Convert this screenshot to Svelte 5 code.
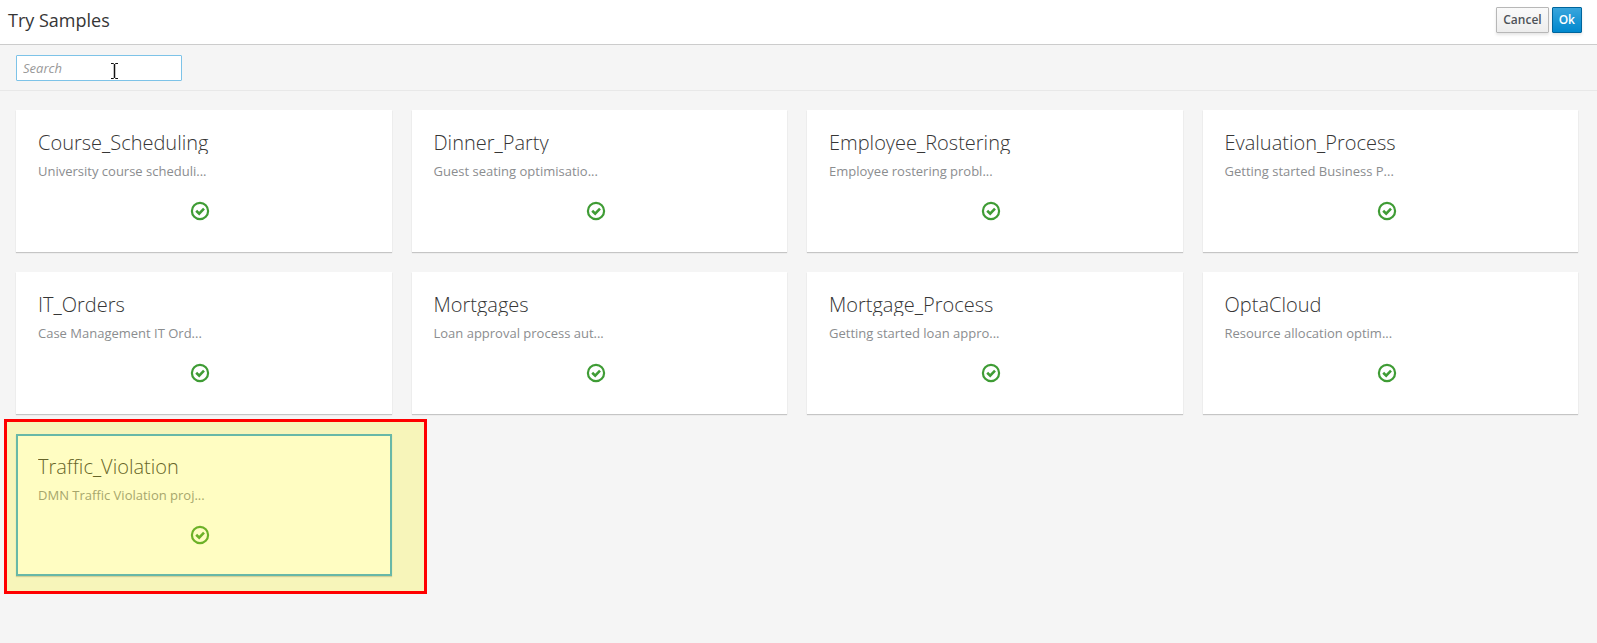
<script>
  const samples = [
    { name: 'Course_Scheduling', description: 'University course scheduli...' },
    { name: 'Dinner_Party', description: 'Guest seating optimisatio...' },
    { name: 'Employee_Rostering', description: 'Employee rostering probl...' },
    { name: 'Evaluation_Process', description: 'Getting started Business P...' },
    { name: 'IT_Orders', description: 'Case Management IT Ord...' },
    { name: 'Mortgages', description: 'Loan approval process aut...' },
    { name: 'Mortgage_Process', description: 'Getting started loan appro...' },
    { name: 'OptaCloud', description: 'Resource allocation optim...' },
    { name: 'Traffic_Violation', description: 'DMN Traffic Violation proj...' }
  ];
  let selected = $state('Traffic_Violation');
  let query = $state('');
  const visible = $derived(
    samples.filter((s) => s.name.toLowerCase().includes(query.toLowerCase()))
  );
</script>

<div class="page">
  <header>
    <h1>Try Samples</h1>
    <div class="actions">
      <button class="btn" type="button">Cancel</button>
      <button class="btn primary" type="button">Ok</button>
    </div>
  </header>

  <div class="toolbar">
    <div class="search">
      <input type="text" placeholder="Search" aria-label="Search" bind:value={query} />
      <svg class="caret" width="9" height="18" viewBox="0 0 9 18" aria-hidden="true">
        <path d="M1 1.5h2.5l1 1 1-1H8M4.5 2v14M1 16.5h2.5l1-1 1 1H8" fill="none" stroke="#fff" stroke-width="3" />
        <path d="M1 1.5h2.5l1 1 1-1H8M1 16.5h2.5l1-1 1 1H8" fill="none" stroke="#111" />
        <path d="M4.5 2v14" fill="none" stroke="#111" stroke-width="1.5" />
      </svg>
    </div>
  </div>

  <main>
    {#each visible as sample (sample.name)}
      <div class="cell">
        <button
          class="card"
          class:selected={sample.name === selected}
          type="button"
          aria-pressed={sample.name === selected}
          onclick={() => (selected = sample.name)}
        >
          <span class="name">{sample.name}</span>
          <span class="description">{sample.description}</span>
          <svg class="ok" width="20" height="20" viewBox="0 0 20 20" aria-hidden="true">
            <circle cx="10" cy="10" r="8.1" fill="none" stroke="#3f9c35" stroke-width="2.2" />
            <path d="M6.2 9.7l3 2.9 4.8-4.9" fill="none" stroke="#3f9c35" stroke-width="2.6" />
          </svg>
        </button>
        {#if sample.name === selected}
          <div class="highlight"></div>
        {/if}
      </div>
    {/each}
  </main>
</div>

<style>
  :global(body) {
    background: #f5f5f5;
  }
  .page {
    min-height: 100vh;
    background: #f5f5f5;
    color: #363636;
    font-family: 'Open Sans', sans-serif;
    font-size: 13px;
    line-height: 20px;
  }
  header {
    display: flex;
    align-items: center;
    justify-content: space-between;
    box-sizing: border-box;
    height: 45px;
    padding: 0 15px 4px 8px;
    background: #fff;
    border-bottom: 1px solid #ccc;
  }
  h1 {
    margin: 0;
    font-size: 18px;
    font-weight: 400;
    line-height: 24px;
  }
  .actions {
    display: flex;
    gap: 3px;
  }
  .btn {
    box-sizing: border-box;
    height: 26px;
    padding: 0 6px;
    border: 1px solid #b7b7b7;
    border-radius: 1px;
    background: linear-gradient(#fafafa, #ededed);
    box-shadow: 0 2px 3px rgba(3, 3, 3, 0.1);
    color: #4d5258;
    font: 600 12px/22px 'Open Sans', sans-serif;
  }
  .primary {
    border-color: #00659c;
    background: linear-gradient(#39a5dc, #0088ce);
    color: #fff;
  }
  .toolbar {
    padding: 10px 16px 9px;
    border-bottom: 1px solid #e8e8e8;
  }
  .search {
    position: relative;
    width: 166px;
  }
  input {
    display: block;
    box-sizing: border-box;
    width: 100%;
    height: 26px;
    padding: 0 6px;
    border: 1px solid #7dc3e8;
    border-radius: 1px;
    outline: none;
    background: #fff;
    color: #363636;
    font: 13px/20px 'Open Sans', sans-serif;
  }
  input::placeholder {
    color: #999;
    font-style: italic;
    opacity: 1;
  }
  .caret {
    position: absolute;
    left: 94px;
    top: 7px;
  }
  main {
    display: grid;
    grid-template-columns: repeat(4, 1fr);
    gap: 20px;
    padding: 19px 19px 20px 16px;
  }
  .cell {
    position: relative;
    display: flex;
  }
  .card {
    display: flex;
    flex: 1;
    flex-direction: column;
    box-sizing: border-box;
    min-width: 0;
    padding: 20px 27px 29px 20px;
    border: 2px solid transparent;
    background: #fff;
    background-clip: border-box;
    box-shadow: 0 1px 1px rgba(3, 3, 3, 0.2);
    color: inherit;
    font: inherit;
    text-align: left;
  }
  .selected {
    border-color: #39a5dc;
  }
  .name {
    overflow: hidden;
    font-size: 20px;
    font-weight: 300;
    line-height: 22px;
  }
  .description {
    margin-top: 7px;
    color: #8b8d8f;
  }
  .ok {
    align-self: center;
    margin-top: 20px;
  }
  .highlight {
    position: absolute;
    inset: -15px -35px -18px -12px;
    border: 3px solid #f00;
    background: rgba(255, 247, 0, 0.24);
    pointer-events: none;
  }
</style>
